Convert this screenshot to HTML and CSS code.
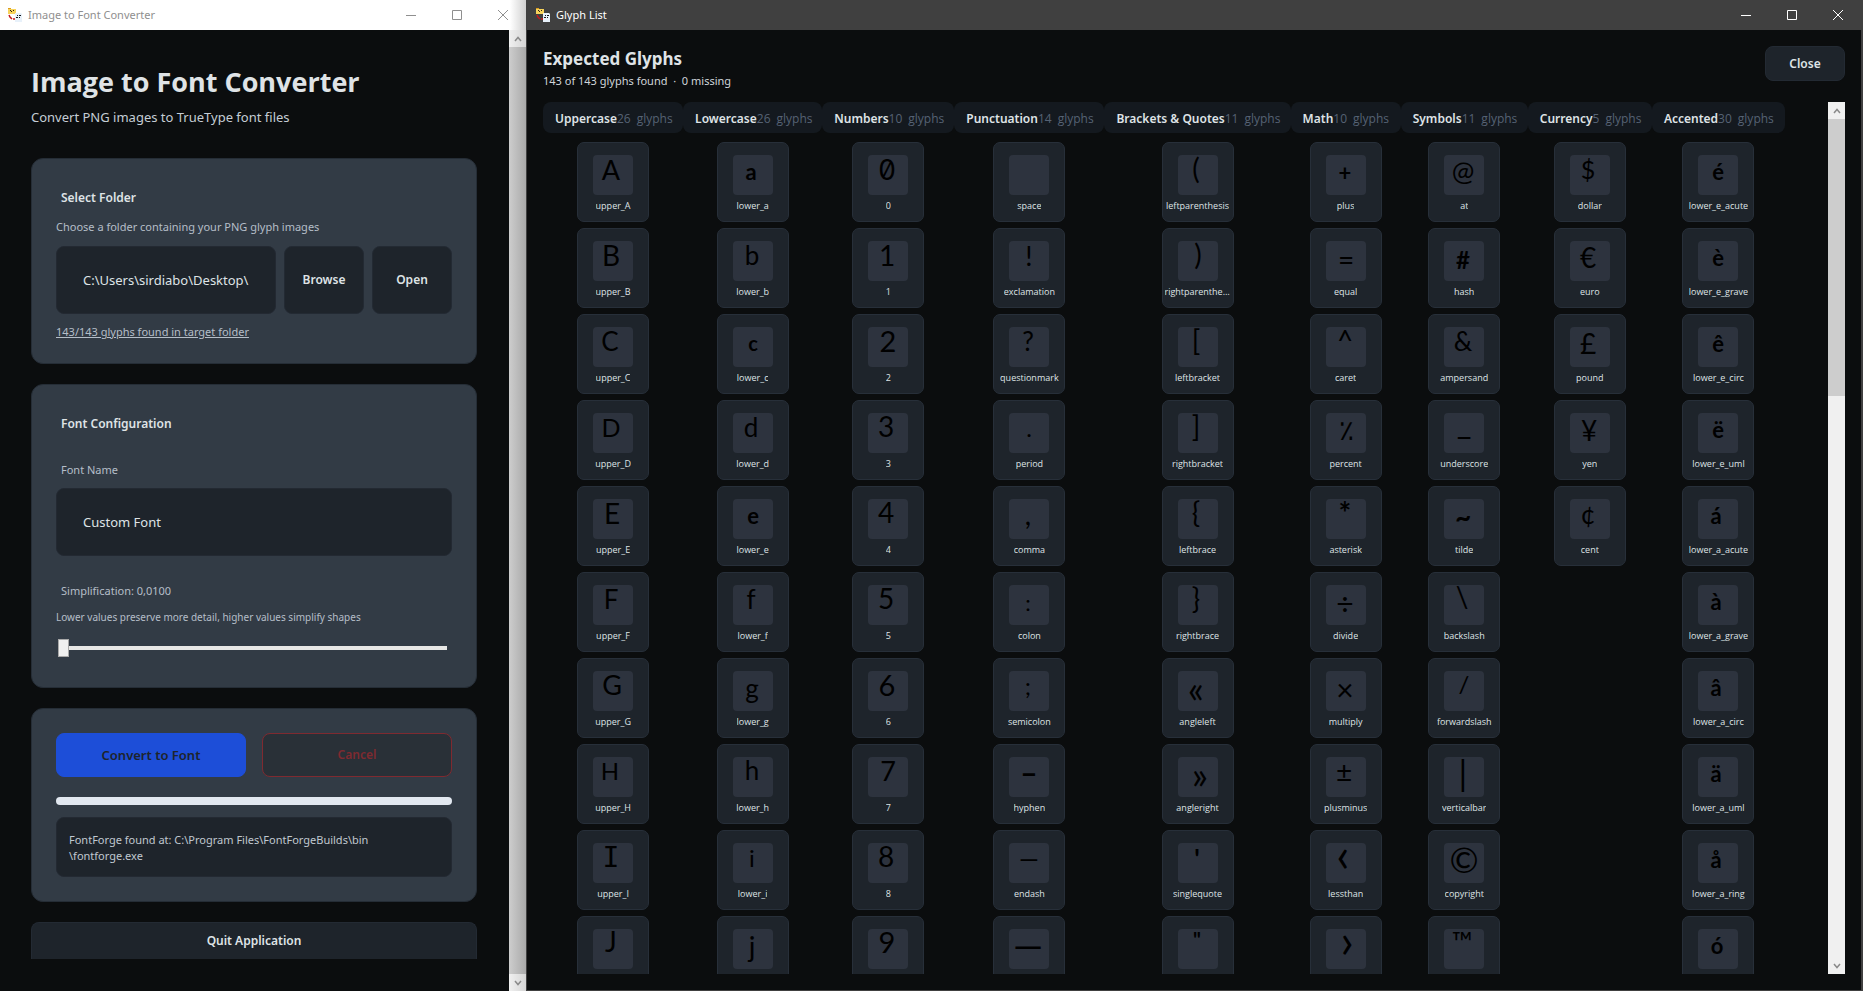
FILE: index.html
```html
<!DOCTYPE html>
<html lang="en">
<head>
<meta charset="utf-8">
<title>Image to Font Converter</title>
<link rel="stylesheet" href="styles.css">
</head>
<body>
<svg class="defs" aria-hidden="true">
  <symbol id="app-icon" viewBox="0 0 15 14">
    <path d="M0 0h3v1h5v5H0z" fill="#f7d35c"/>
    <path d="M0 0h3v1H0z" fill="#d99a1c"/>
    <path d="M2 2h1v1H2zM5 2h1v1H5zM3 3h1v1H3z" fill="#2b2310"/>
    <path d="M1 7l1 2 2 2M5 11h3" fill="none" stroke="#c4181c" stroke-width="1.5"/>
    <path d="M7 5h6l1 1v8H7z" fill="#e8f1fa"/>
    <path d="M9 7h1v1H9zM11 7h2v1h-2zM8 9h2v1H8zM11 9h1v1h-1z" fill="#15181c"/>
  </symbol>
  <symbol id="minimize" viewBox="0 0 10 10"><path d="M0 5.5h10" stroke="currentColor"/></symbol>
  <symbol id="maximize" viewBox="0 0 10 10"><path d="M.5.5h9v9h-9z" fill="none" stroke="currentColor"/></symbol>
  <symbol id="close" viewBox="0 0 10 10"><path d="M0 0l10 10M10 0L0 10" stroke="currentColor"/></symbol>
  <symbol id="up" viewBox="0 0 8 6"><path d="M1 5l3-3.500L7 5" fill="none" stroke="currentColor" stroke-width="1.500"/></symbol>
  <symbol id="down" viewBox="0 0 8 6"><path d="M1 1l3 3.500L7 1" fill="none" stroke="currentColor" stroke-width="1.500"/></symbol>
</svg>
<div class="desktop">
  <section class="window converter" aria-label="Image to Font Converter">
    <header class="titlebar titlebar-light">
      <svg class="app-icon" aria-hidden="true"><use href="#app-icon"/></svg>
      <span class="window-title">Image to Font Converter</span>
      <button class="caption" aria-label="Minimize"><svg><use href="#minimize"/></svg></button>
      <button class="caption" aria-label="Maximize"><svg><use href="#maximize"/></svg></button>
      <button class="caption" aria-label="Close window"><svg><use href="#close"/></svg></button>
    </header>
    <div class="converter-body">
      <main class="form">
        <h1>Image to Font Converter</h1>
        <p class="lead">Convert PNG images to TrueType font files</p>
        <section class="panel">
          <h2>Select Folder</h2>
          <label class="text" for="folder">Choose a folder containing your PNG glyph images</label>
          <div class="folder-row">
            <input class="field" id="folder" type="text" value="C:\Users\sirdiabo\Desktop\">
            <button class="button">Browse</button>
            <button class="button">Open</button>
          </div>
          <a class="text found" href="#glyph-list">143/143 glyphs found in target folder</a>
        </section>
        <section class="panel panel-config">
          <h2>Font Configuration</h2>
          <label class="text name-label" for="font-name">Font Name</label>
          <input class="field" id="font-name" type="text" value="Custom Font">
          <label class="text simplify-label" for="simplify">Simplification: 0,0100</label>
          <p class="hint">Lower values preserve more detail, higher values simplify shapes</p>
          <input class="slider" id="simplify" type="range" min="0" max="100" value="0">
        </section>
        <section class="panel panel-actions">
          <div class="actions">
            <button class="button convert">Convert to Font</button>
            <button class="button cancel">Cancel</button>
          </div>
          <div class="progress" role="progressbar" aria-label="Conversion progress" aria-valuenow="0"></div>
          <p class="status">FontForge found at: C:\Program Files\FontForgeBuilds\bin<br>\fontforge.exe</p>
        </section>
        <button class="button quit">Quit Application</button>
      </main>
      <div class="scrollbar">
        <button class="scroll-button" aria-label="Scroll up"><svg><use href="#up"/></svg></button>
        <div class="scroll-thumb"></div>
        <button class="scroll-button" aria-label="Scroll down"><svg><use href="#down"/></svg></button>
      </div>
    </div>
  </section>
  <section class="window glyph-window" id="glyph-list" aria-label="Glyph List">
    <header class="titlebar titlebar-dark">
      <svg class="app-icon" aria-hidden="true"><use href="#app-icon"/></svg>
      <span class="window-title">Glyph List</span>
      <button class="caption" aria-label="Minimize"><svg><use href="#minimize"/></svg></button>
      <button class="caption" aria-label="Maximize"><svg><use href="#maximize"/></svg></button>
      <button class="caption" aria-label="Close window"><svg><use href="#close"/></svg></button>
    </header>
    <div class="glyph-body">
      <div class="glyph-head">
        <div>
          <h2 class="glyph-title">Expected Glyphs</h2>
          <p class="glyph-summary">143 of 143 glyphs found &nbsp;·&nbsp; 0 missing</p>
        </div>
        <button class="button close-list">Close</button>
      </div>
      <div class="glyph-scroll">
        <div class="columns" id="columns"></div>
        <div class="scrollbar scrollbar-list">
          <button class="scroll-button" aria-label="Scroll up"><svg><use href="#up"/></svg></button>
          <div class="scroll-track"><div class="scroll-thumb thumb-part"></div></div>
          <button class="scroll-button" aria-label="Scroll down"><svg><use href="#down"/></svg></button>
        </div>
      </div>
    </div>
  </section>
</div>
<script src="glyphs.js"></script>
</body>
</html>
```
FILE: styles.css
```css
* { box-sizing: border-box; }
body { margin: 0; background: #0b0d0e; color: #dfe3e6; font: 12px/16px "Noto Sans", "Open Sans", sans-serif; }
h1, h2, p { margin: 0; }
button, input { font: inherit; color: inherit; margin: 0; }
button { border: 0; padding: 0; background: none; }
svg { display: block; }
.defs { display: none; }
.desktop { display: grid; grid-template-columns: 526fr 1337fr; height: 100vh; overflow: hidden; }
.window { display: flex; flex-direction: column; min-width: 0; min-height: 0; }

.titlebar { display: flex; align-items: center; flex: none; height: 30px; padding-left: 8px; }
.titlebar-light { background: linear-gradient(to left, #d0d0d0, #fff 16px); color: #8f8f8f; }
.titlebar-dark { background: #404040; color: #fff; padding-left: 9px; }
.app-icon { width: 15px; height: 14px; margin-right: 5px; }
.window-title { flex: 1; font-size: 11px; }
.caption { width: 46px; height: 30px; display: grid; place-items: center; }
.caption svg { width: 10px; height: 10px; }

.converter-body { display: flex; flex: 1; min-height: 0; }
.form { flex: 1; min-width: 0; padding: 32px 32px 32px 31px; display: flex; flex-direction: column; overflow: hidden; }
h1 { font-family: "Open Sans", sans-serif; font-size: 27px; line-height: 40px; font-weight: 700; }
.lead { font-size: 13px; line-height: 20px; margin: 5px 0 31px; color: #c5cdd5; }
.panel { flex: none; display: flex; flex-direction: column; margin-bottom: 20px; padding: 24px; border: 1px solid #252d36; border-radius: 12px; background: #323b45; }
.panel h2 { font-size: 12px; line-height: 16px; font-weight: 600; margin: 7px 5px 13px; }
.text { color: #b5bec8; font-size: 11px; line-height: 16px; }
.folder-row { display: grid; grid-template-columns: 1fr 80px 80px; gap: 8px; margin: 11px 0 11px; }
.field { width: 100%; min-width: 0; height: 68px; padding: 0 26px; border: 1px solid #232932; border-radius: 8px; background: #1e242b; font-size: 13px; }
.button { border: 1px solid #232a33; border-radius: 8px; background: #1e242b; font-weight: 600; }
.found { align-self: flex-start; line-height: 14px; text-decoration: underline; }
.panel-config { min-height: 304px; }
.name-label { margin: 17px 5px 10px; }
.panel-config h2 { margin-bottom: 13px; }
.simplify-label { margin: 27px 5px 10px; }
.hint { font-size: 10px; line-height: 16px; color: #b5bec8; }
.slider { appearance: none; height: 18px; margin: 14px 5px 0 2px; background: linear-gradient(#e7e7e5, #e7e7e5) center / 100% 4px no-repeat; }
.slider::-webkit-slider-thumb { appearance: none; width: 11px; height: 18px; border: 1px solid #a9a9a9; background: #f0f0f0; }
.actions { display: grid; grid-template-columns: 1fr 1fr; gap: 16px; }
.actions .button { height: 44px; }
.actions .convert { background: #1d4ed8; border-color: #1d4ed8; color: #1e242b; font-size: 13px; }
.actions .cancel { border-color: #7f2a30; background: #293037; color: #7f2a30; }
.progress { height: 8px; margin: 20px 0 12px; border-radius: 4px; background: #e2e8f0; }
.status { padding: 14px 12px; height: 60px; border: 1px solid #232932; border-radius: 8px; background: #1e242b; color: #c0c8d0; font-size: 11px; }
.quit { flex: none; height: 37px; border-radius: 8px 8px 0 0; border-bottom: 0; }

.scrollbar { flex: none; width: 17px; display: flex; flex-direction: column; background: #f0f0f0; color: #8a8a8a; }
.converter .scrollbar { background: linear-gradient(to right, #f0f0f0, #d5d5d5); }
.scroll-button { height: 17px; flex: none; display: grid; place-items: center; }
.scroll-button svg { width: 8px; height: 6px; }
.scroll-thumb { flex: 1; background: #cdcdcd; }
.converter .scroll-thumb { background: linear-gradient(to right, #cdcdcd, #a9a9a9); }
.scroll-track { flex: 1; min-height: 0; }
.thumb-part { height: 33%; }

.glyph-window { border: solid #404040; border-width: 0 2px 1px 1px; }
.glyph-body { flex: 1; min-height: 0; display: flex; flex-direction: column; padding: 16px 16px 16px; }
.glyph-head { display: flex; justify-content: space-between; height: 56px; }
.glyph-title { font-size: 17px; line-height: 26px; font-weight: 700; }
.glyph-summary { font-size: 11px; line-height: 18px; color: #d0d5da; }
.close-list { width: 80px; height: 35px; font-size: 12px; }
.glyph-scroll { display: flex; flex: 1; min-height: 0; }
.columns { flex: 1; min-width: 0; overflow: hidden; padding-right: 43px; display: grid; align-items: start;
  grid-template-columns: 140fr 139fr 132fr 150fr 186fr 110fr 127fr 124fr 133fr; }
.column { display: flex; flex-direction: column; align-items: center; gap: 6px; min-width: 0; }
.column-head { width: 100%; height: 31px; margin-bottom: 3px; padding: 2px 12px 0; display: flex; align-items: center; border-radius: 8px; background: #14191f; white-space: nowrap; color: #566274; font-family: "Open Sans", sans-serif; }
.column-head h3 { margin: 0; font-family: "Noto Sans", sans-serif; font-size: 12px; font-weight: 600; color: #dfe3e6; }
.column-head .unit { margin-left: 6px; }
.card { width: 72px; height: 80px; padding: 12px 2px 0; border: 1px solid #272f39; border-radius: 7px; background: #1e242b; display: flex; flex-direction: column; align-items: center; }
.preview { flex: none; width: 40px; height: 40px; border-radius: 4px; background: #2d333e; overflow: visible; }
.preview text { font-family: Lato, "Noto Sans", sans-serif; text-anchor: middle; fill: #000; }
.preview .strong { font-weight: 700; }
.preview .serifed { font-family: "DejaVu Sans Mono", monospace; }
.preview .slashed { font-family: Inter, sans-serif; font-feature-settings: "zero"; }
.card-name { max-width: 100%; margin-top: 4px; font-family: "Open Sans", sans-serif; font-size: 9px; line-height: 14px; white-space: nowrap; overflow: hidden; text-overflow: ellipsis; }
```
FILE: glyphs.js
```js
// Each glyph: name, character, font size, centre x and baseline y in its 40px preview, optional style.
const groups = [
  ["Uppercase", 26, [
    ["upper_A", "A", 27, 18, 25], ["upper_B", "B", 28, 18, 25], ["upper_C", "C", 26, 17, 24],
    ["upper_D", "D", 25, 18, 24], ["upper_E", "E", 28, 19, 25], ["upper_F", "F", 26, 18, 24],
    ["upper_G", "G", 27, 19, 24], ["upper_H", "H", 24, 17, 23], ["upper_I", "I", 28, 18, 24, "serifed"],
    ["upper_J", "J", 28, 18, 23]]],
  ["Lowercase", 26, [
    ["lower_a", "a", 22, 18, 25, "strong"], ["lower_b", "b", 26, 19, 24], ["lower_c", "c", 20, 20, 24, "strong"],
    ["lower_d", "d", 26, 18, 24], ["lower_e", "e", 22, 20, 25, "strong"], ["lower_f", "f", 26, 18, 24],
    ["lower_g", "g", 26, 19, 27], ["lower_h", "h", 26, 19, 23], ["lower_i", "i", 24, 19, 24],
    ["lower_j", "j", 28, 19, 28]]],
  ["Numbers", 10, [
    ["0", "0", 28, 19, 25, "slashed"], ["1", "1", 28, 19, 25], ["2", "2", 29, 20, 25], ["3", "3", 28, 18, 24],
    ["4", "4", 28, 18, 24], ["5", "5", 28, 18, 24], ["6", "6", 29, 19, 25], ["7", "7", 27, 20, 24],
    ["8", "8", 28, 18, 24], ["9", "9", 29, 19, 24]]],
  ["Punctuation", 14, [
    ["space", "", 24, 20, 25], ["exclamation", "!", 27, 20, 25], ["questionmark", "?", 26, 19, 24],
    ["period", ".", 24, 20, 24], ["comma", ",", 28, 19, 26], ["colon", ":", 22, 19, 26],
    ["semicolon", ";", 24, 19, 24], ["hyphen", "–", 30, 20, 27, "strong"], ["endash", "—", 25, 20, 25],
    ["emdash", "—", 38, 19, 30]]],
  ["Brackets & Quotes", 11, [
    ["leftparenthesis", "(", 28, 18, 24], ["rightparenthesis", ")", 28, 20, 24],
    ["leftbracket", "[", 28, 18, 24], ["rightbracket", "]", 28, 18, 24],
    ["leftbrace", "{", 28, 18, 24], ["rightbrace", "}", 28, 18, 24],
    ["angleleft", "«", 38, 18, 32], ["angleright", "»", 38, 22, 32],
    ["singlequote", "'", 26, 19, 25, "strong"], ["doublequote", "\"", 20, 19, 18, "strong"]]],
  ["Math", 10, [
    ["plus", "+", 22, 19, 26, "strong"], ["equal", "=", 28, 20, 29], ["caret", "^", 28, 19, 24],
    ["percent", "٪", 28, 20, 27], ["asterisk", "*", 30, 19, 25, "strong"], ["divide", "÷", 30, 19, 30],
    ["multiply", "×", 30, 19, 30], ["plusminus", "±", 28, 18, 25], ["lessthan", "‹", 48, 17, 29],
    ["greaterthan", "›", 48, 21, 29]]],
  ["Symbols", 11, [
    ["at", "@", 27, 19, 26], ["hash", "#", 24, 19, 28, "strong"], ["ampersand", "&", 26, 19, 24],
    ["underscore", "_", 32, 20, 21], ["tilde", "~", 28, 19, 28, "strong"], ["backslash", "\\", 28, 18, 22],
    ["forwardslash", "/", 24, 20, 22], ["verticalbar", "|", 35, 19, 29], ["copyright", "©", 35, 20, 30],
    ["trademark", "™", 28, 18, 23]]],
  ["Currency", 5, [
    ["dollar", "$", 25, 18, 24], ["euro", "€", 28, 18, 27], ["pound", "£", 28, 18, 27],
    ["yen", "¥", 28, 19, 28], ["cent", "¢", 26, 18, 25]]],
  ["Accented", 30, [
    ["lower_e_acute", "é", 22, 20, 25, "strong"], ["lower_e_grave", "è", 22, 20, 25, "strong"],
    ["lower_e_circ", "ê", 22, 20, 25, "strong"], ["lower_e_uml", "ë", 22, 20, 25, "strong"],
    ["lower_a_acute", "á", 22, 18, 25, "strong"], ["lower_a_grave", "à", 22, 18, 25, "strong"],
    ["lower_a_circ", "â", 22, 18, 25, "strong"], ["lower_a_uml", "ä", 22, 18, 25, "strong"],
    ["lower_a_ring", "å", 22, 18, 25, "strong"], ["lower_o_acute", "ó", 22, 19, 25, "strong"]]]
];

const SVG = "http://www.w3.org/2000/svg";

function make(tag, className, text) {
  const node = document.createElement(tag);
  if (className) node.className = className;
  if (text !== undefined) node.textContent = text;
  return node;
}

function makeCard([name, character, size, x, y, style]) {
  const card = make("div", "card");
  const preview = document.createElementNS(SVG, "svg");
  preview.setAttribute("class", "preview");
  preview.setAttribute("viewBox", "0 0 40 40");
  const text = document.createElementNS(SVG, "text");
  text.setAttribute("x", x);
  text.setAttribute("y", y);
  text.setAttribute("font-size", size);
  if (style) text.setAttribute("class", style);
  text.textContent = character;
  preview.append(text);
  card.append(preview, make("span", "card-name", name));
  return card;
}

for (const [title, count, glyphs] of groups) {
  const column = make("section", "column");
  const head = make("header", "column-head");
  head.append(make("h3", "", title), make("span", "", count), make("span", "unit", "glyphs"));
  column.append(head, ...glyphs.map(makeCard));
  document.getElementById("columns").append(column);
}
```
